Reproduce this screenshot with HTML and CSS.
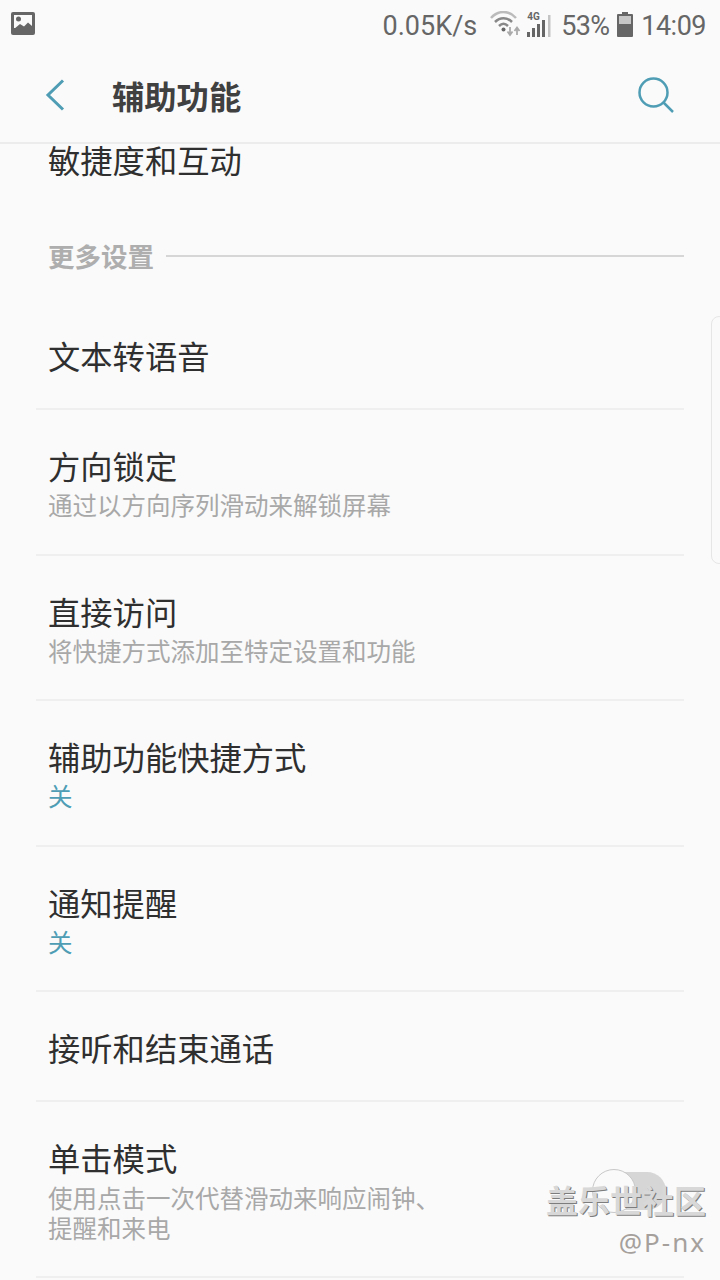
FILE: index.html
```html
<!DOCTYPE html>
<html lang="zh">
<head>
<meta charset="utf-8">
<title>辅助功能</title>
<link rel="stylesheet" href="styles.css">
</head>
<body>
<div class="screen">
  <div class="status">
    <svg class="pic" width="24" height="24" viewBox="0 0 24 24"><rect x="0" y="0" width="24" height="23" rx="2" fill="#666"/><rect x="3" y="3" width="18" height="13" fill="#fafafa"/><circle cx="7.500" cy="7" r="2.500" fill="#666"/><path d="M3 17L9 12L13 14.500L17 10.500L21 14V18H3Z" fill="#666"/></svg>
    <div class="status-right">
      <span class="speed">0.05K/s</span>
      <svg class="wifi" width="32" height="26" viewBox="0 0 32 26" fill="none"><path d="M1 7C8-1 19-1 26 7" stroke="#bbb" stroke-width="2.500"/><path d="M5 11C10 6 17 6 22 11" stroke="#888" stroke-width="2.500"/><path d="M9 15C12 12 15 12 18 15" stroke="#888" stroke-width="2.500"/><circle cx="13.500" cy="18.500" r="2" fill="#666"/><path d="M20 16V23M17.500 20.500L20 24L22.500 20.500" stroke="#aaa" stroke-width="1.800"/><path d="M27 24V17M24.500 20L27 16.500L29.500 20" stroke="#aaa" stroke-width="1.800"/></svg>
      <span class="sig">
        <span class="four-g">4G</span>
        <svg width="24" height="22" viewBox="0 0 24 22"><rect x="0" y="17" width="3" height="5" fill="#666"/><rect x="5" y="13" width="3" height="9" fill="#666"/><rect x="10" y="9" width="3" height="13" fill="#666"/><rect x="15" y="5" width="3" height="17" fill="#666"/><rect x="21" y="0" width="2.500" height="22" fill="#c4c4c4"/></svg>
      </span>
      <span class="pct">53%</span>
      <svg class="batt" width="16" height="25" viewBox="0 0 16 25"><path d="M5 0H11V2H15A1 1 0 0 1 16 3V24A1 1 0 0 1 15 25H1A1 1 0 0 1 0 24V3A1 1 0 0 1 1 2H5Z" fill="#666"/><rect x="2" y="4" width="12" height="8" fill="#c6c6c6"/></svg>
      <span class="time">14:09</span>
    </div>
  </div>

  <header class="toolbar">
    <svg class="back" width="20" height="32" viewBox="0 0 20 32" fill="none"><path d="M18 1.500L3 16L18 30.500" stroke="#4e9db5" stroke-width="3"/></svg>
    <h1 class="title">辅助功能</h1>
    <svg class="search" width="36" height="36" viewBox="0 0 36 36" fill="none"><circle cx="15.500" cy="15.500" r="14" stroke="#4e9db5" stroke-width="2.500"/><path d="M25.500 25.500L35 35" stroke="#4e9db5" stroke-width="2.500"/></svg>
  </header>

  <main class="list">
    <div class="clip-row"><span class="label">敏捷度和互动</span></div>
    <div class="section"><span class="section-name">更多设置</span><span class="section-line"></span></div>
    <div class="row short"><div class="label">文本转语音</div></div>
    <div class="row"><div class="label">方向锁定</div><div class="sub">通过以方向序列滑动来解锁屏幕</div></div>
    <div class="row"><div class="label">直接访问</div><div class="sub">将快捷方式添加至特定设置和功能</div></div>
    <div class="row"><div class="label">辅助功能快捷方式</div><div class="sub accent">关</div></div>
    <div class="row"><div class="label">通知提醒</div><div class="sub accent">关</div></div>
    <div class="row short"><div class="label">接听和结束通话</div></div>
    <div class="row tall"><div class="label">单击模式</div><div class="sub multi">使用点击一次代替滑动来响应闹钟、<br>提醒和来电</div></div>
  </main>

  <div class="handle"></div>
  <div class="toggle"><span class="knob"></span></div>
  <div class="mark">
    <div class="mark-name">盖乐世社区</div>
    <div class="mark-user">@P-nx</div>
  </div>
</div>
</body>
</html>
```
FILE: styles.css
```css
* { box-sizing: border-box; }
html, body { margin: 0; padding: 0; }
body {
  background: #fafafa;
  font-family: "Noto Sans CJK SC", "Noto Sans", sans-serif;
}
.screen {
  position: relative;
  width: 720px;
  height: 1280px;
  overflow: hidden;
  background: #fafafa;
  display: flex;
  flex-direction: column;
}
.status {
  height: 48px;
  flex: none;
  display: flex;
  align-items: center;
  justify-content: space-between;
  padding: 0 14px 0 11px;
  font-family: Roboto, sans-serif;
  font-size: 27px;
  color: #666;
}
.pic { display: block; margin-top: -1px; }
.status-right { display: flex; align-items: center; }
.status-right span { position: relative; top: 2px; }
.speed { margin-right: 13px; }
.wifi { margin-right: 5px; }
.sig { display: block; width: 24px; height: 22px; margin-right: 10px; }
.sig svg { display: block; }
.status-right .four-g {
  position: absolute;
  left: 0;
  top: -4px;
  font-size: 10px;
  line-height: 12px;
  font-weight: 700;
  color: #666;
}
.pct { margin-right: 8px; letter-spacing: -0.700px; }
.batt { margin-right: 8px; }
.time { letter-spacing: -0.500px; }
.toolbar {
  height: 96px;
  flex: none;
  display: flex;
  align-items: center;
  padding: 0 46px 0 45px;
  border-bottom: 2px solid #ececec;
}
.back { display: block; margin-top: -1px; }
.title {
  margin: 0 0 0 47px;
  font-size: 32.300px;
  line-height: 46px;
  font-weight: 700;
  color: #404040;
  flex: 1;
}
.search { display: block; margin-top: -1px; }
.list { flex: 1; min-height: 0; padding: 0 36px; }
.clip-row { height: 38px; padding-left: 12px; }
.label {
  display: block;
  font-size: 32.300px;
  line-height: 38px;
  color: #2f2f2f;
}
.clip-row .label { position: relative; top: -2px; margin-top: -2px; }
.section {
  height: 120px;
  padding: 57px 0 0 12px;
  display: flex;
  align-items: flex-start;
  gap: 12px;
}
.section-name {
  font-size: 26.500px;
  line-height: 38px;
  font-weight: 700;
  color: #aeaeae;
}
.section-line { flex: 1; height: 2px; margin-top: 18px; background: #d6d6d6; }
.row {
  height: 145.500px;
  padding: 36px 0 0 12px;
  border-bottom: 2px solid #efefef;
}
.row.short { height: 110px; }
.row.tall { height: 176px; }
.sub {
  font-size: 24.500px;
  line-height: 34px;
  margin-top: 4px;
  color: #a8a8a8;
}
.sub.multi { line-height: 30px; margin-top: 7px; }
.accent { color: #4e9db5; }
.handle {
  position: absolute;
  left: 711px;
  top: 316px;
  width: 16px;
  height: 248px;
  border: 1px solid #e6e6e6;
  border-radius: 12px;
}
.toggle {
  position: absolute;
  left: 596px;
  top: 1172px;
  width: 70px;
  height: 38px;
  border-radius: 19px;
  background: #d6d6d6;
}
.knob {
  position: absolute;
  left: -4px;
  top: -3px;
  width: 44px;
  height: 44px;
  border-radius: 50%;
  background: #fafafa;
  border: 1px solid #c8c8c8;
}
.mark {
  position: absolute;
  right: 14px;
  top: 1177px;
  text-align: right;
}
.mark-name {
  font-size: 32px;
  line-height: 44px;
  font-weight: 700;
  color: #d8d8d8;
  text-shadow: 1px 1px 0 #7d7d7d;
}
.mark-user {
  font-family: "Noto Sans", sans-serif;
  font-size: 26px;
  line-height: 42px;
  letter-spacing: 2px;
  color: #a5a09c;
}
```
